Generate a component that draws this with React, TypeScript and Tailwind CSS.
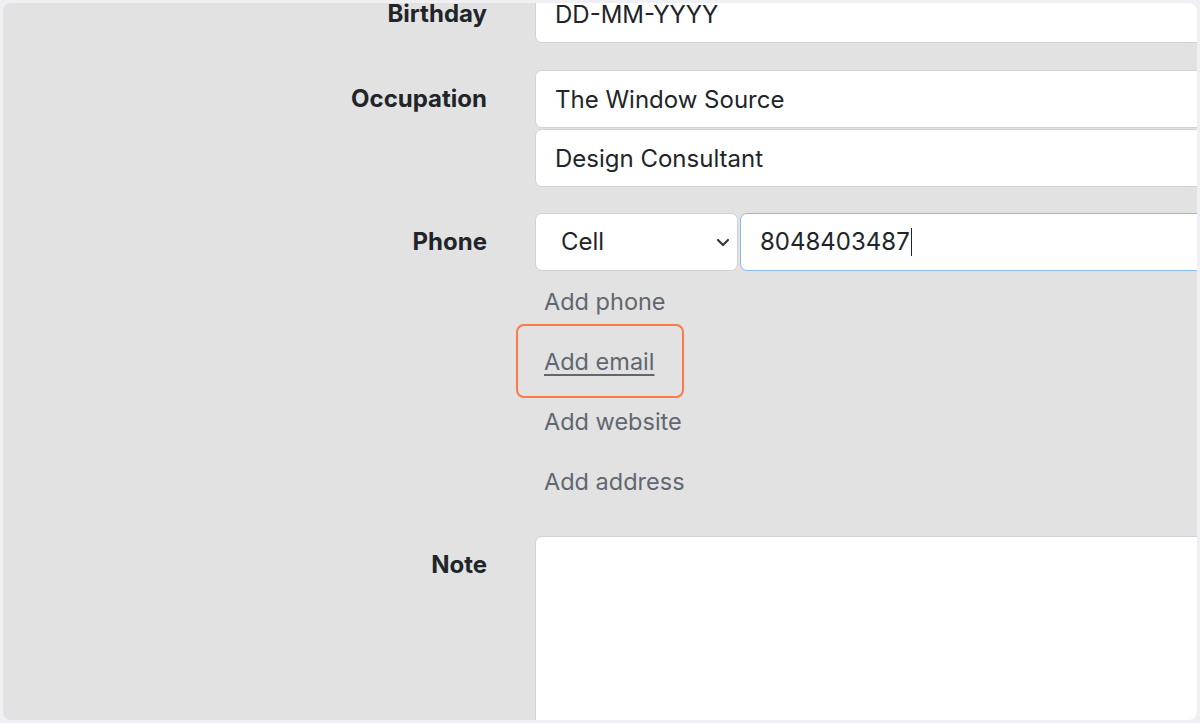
import { FC } from "react";

const Label: FC<{ text: string }> = ({ text }) => (
  <div className="h-[58px] flex items-center justify-end text-[24px] font-bold text-[#212529]">{text}</div>
)

const Field: FC<{ value: string }> = ({ value }) => (
  <input
    readOnly
    value={value}
    className="w-[700px] h-[58px] px-[19px] bg-white border border-[#ced4da] rounded-[7px] text-[24px] text-[#212529] outline-none font-['Inter',sans-serif]"
  />
)

const links = ["Add phone", "Add email", "Add website", "Add address"]

const App: FC = () => {
  return (
    <div className="w-[1200px] h-[723px] bg-[#efeff4] p-[3px] font-['Inter',sans-serif]">
      <div className="h-full rounded-lg bg-[#e2e2e2] overflow-hidden">
        <div className="-mt-[18px] flex flex-col">
          <div className="grid grid-cols-[484px_1fr] gap-x-12">
            <Label text="Birthday" />
            <Field value="DD-MM-YYYY" />
          </div>

          <div className="grid grid-cols-[484px_1fr] gap-x-12 mt-[27px]">
            <Label text="Occupation" />
            <div className="flex flex-col gap-px">
              <Field value="The Window Source" />
              <Field value="Design Consultant" />
            </div>
          </div>

          <div className="grid grid-cols-[484px_1fr] gap-x-12 mt-[26px]">
            <Label text="Phone" />
            <div className="flex flex-col">
              <div className="flex gap-[2px]">
                <div className="w-[203px] h-[58px] shrink-0 flex items-center justify-between pl-[25px] pr-[6px] bg-white border border-[#ced4da] rounded-[7px] text-[24px] text-[#212529]">
                  <span>Cell</span>
                  <svg width="16" height="16" viewBox="0 0 16 16" fill="none" stroke="#343a40" strokeWidth="2.2" strokeLinecap="round" strokeLinejoin="round">
                    <path d="M3 6l5 5 5-5" />
                  </svg>
                </div>
                <div className="w-[600px] h-[58px] shrink-0 flex items-center px-[19px] bg-white border border-[#8bb8f8] rounded-[7px] text-[24px] text-[#212529]">
                  <span>8048403487</span>
                  <span className="w-px h-[28px] bg-[#212529] ml-px"></span>
                </div>
              </div>
              <div className="flex flex-col mt-px">
                {links.map((l) => (
                  <div key={l} className="relative h-[60px] flex items-center pl-[9px] text-[23.5px] text-[#5f6770]">
                    <span className={l === "Add email" ? "underline underline-offset-[4px] decoration-[1.5px]" : ""}>{l}</span>
                    {l === "Add email" && (
                      <div className="absolute -left-[19px] -top-[8px] w-[168px] h-[74px] border-2 border-[#fb7a45] rounded-[8px]"></div>
                    )}
                  </div>
                ))}
              </div>
            </div>
          </div>

          <div className="grid grid-cols-[484px_1fr] gap-x-12 mt-6">
            <Label text="Note" />
            <textarea readOnly className="w-[700px] h-[220px] bg-white border border-[#ced4da] rounded-[7px] resize-none outline-none"></textarea>
          </div>
        </div>
      </div>
    </div>
  )
}

export default App
